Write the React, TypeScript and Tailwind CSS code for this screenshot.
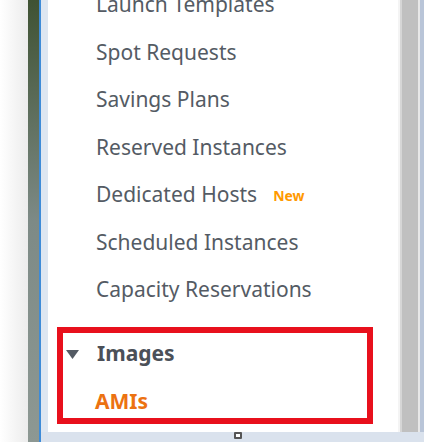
import React from "react";

const items = [
  "Launch Templates",
  "Spot Requests",
  "Savings Plans",
  "Reserved Instances",
  "Dedicated Hosts",
  "Scheduled Instances",
  "Capacity Reservations",
];

export default function App() {
  return (
    <div
      className="w-[424px] h-[442px] flex overflow-hidden bg-white"
      style={{ fontFamily: '"Noto Sans", "Open Sans", sans-serif' }}
    >
      <div className="w-[28px] h-full bg-gradient-to-r from-white to-[#ececec]" />
      <div className="w-[11px] h-full bg-gradient-to-b from-[#3f5233] via-[#7d8a86] to-[#8d9893]" />
      <div className="w-[2px] h-full bg-[#3d8bd8]" />
      <div className="flex-1 flex flex-col">
        <div className="flex-1 flex min-h-0">
          <div className="w-[7px] bg-[#dde6f1]" />
          <div className="flex-1 bg-white flex flex-col overflow-hidden">
            <div className="mt-[-19px] flex flex-col">
              {items.map((t) => (
                <div
                  key={t}
                  className="h-[47.5px] flex items-center pl-[48px] text-[21px] text-[#545b64]"
                >
                  <span>{t}</span>
                  {t === "Dedicated Hosts" && (
                    <span className="ml-[16px] text-[14px] font-bold text-[#ff9900] mt-[2px]">
                      New
                    </span>
                  )}
                </div>
              ))}
            </div>
            <div className="ml-[9px] mt-[13.5px] w-[316px] h-[97px] border-[6px] border-[#e8101c] flex flex-col">
              <div className="h-[42px] flex items-center pl-[3px] text-[21px] font-bold text-[#4b5058]">
                <svg width="13" height="9" viewBox="0 0 13 9" className="mr-[18px]">
                  <polygon points="0,0 13,0 6.5,9" fill="#545b64" />
                </svg>
                <span>Images</span>
              </div>
              <div className="h-[43px] flex items-center pt-[10px] pl-[32px] text-[21px] font-bold text-[#ec7211]">
                AMIs
              </div>
            </div>
          </div>
          <div className="w-[2px] bg-[#f4f4f4]" />
          <div className="w-[2px] bg-[#d6d6d6]" />
          <div className="w-[16px] bg-[#c0c0c0]" />
          <div className="w-[2px] bg-[#e8e8e8]" />
          <div className="w-[4px] bg-[#b9c5d8]" />
        </div>
        <div className="h-[10px] bg-[#dae2ed] flex items-start justify-center pl-[10px]">
          <div className="w-[8px] h-[7px] border-[2px] border-[#555] bg-white rounded-[1px]" />
        </div>
      </div>
    </div>
  );
}
